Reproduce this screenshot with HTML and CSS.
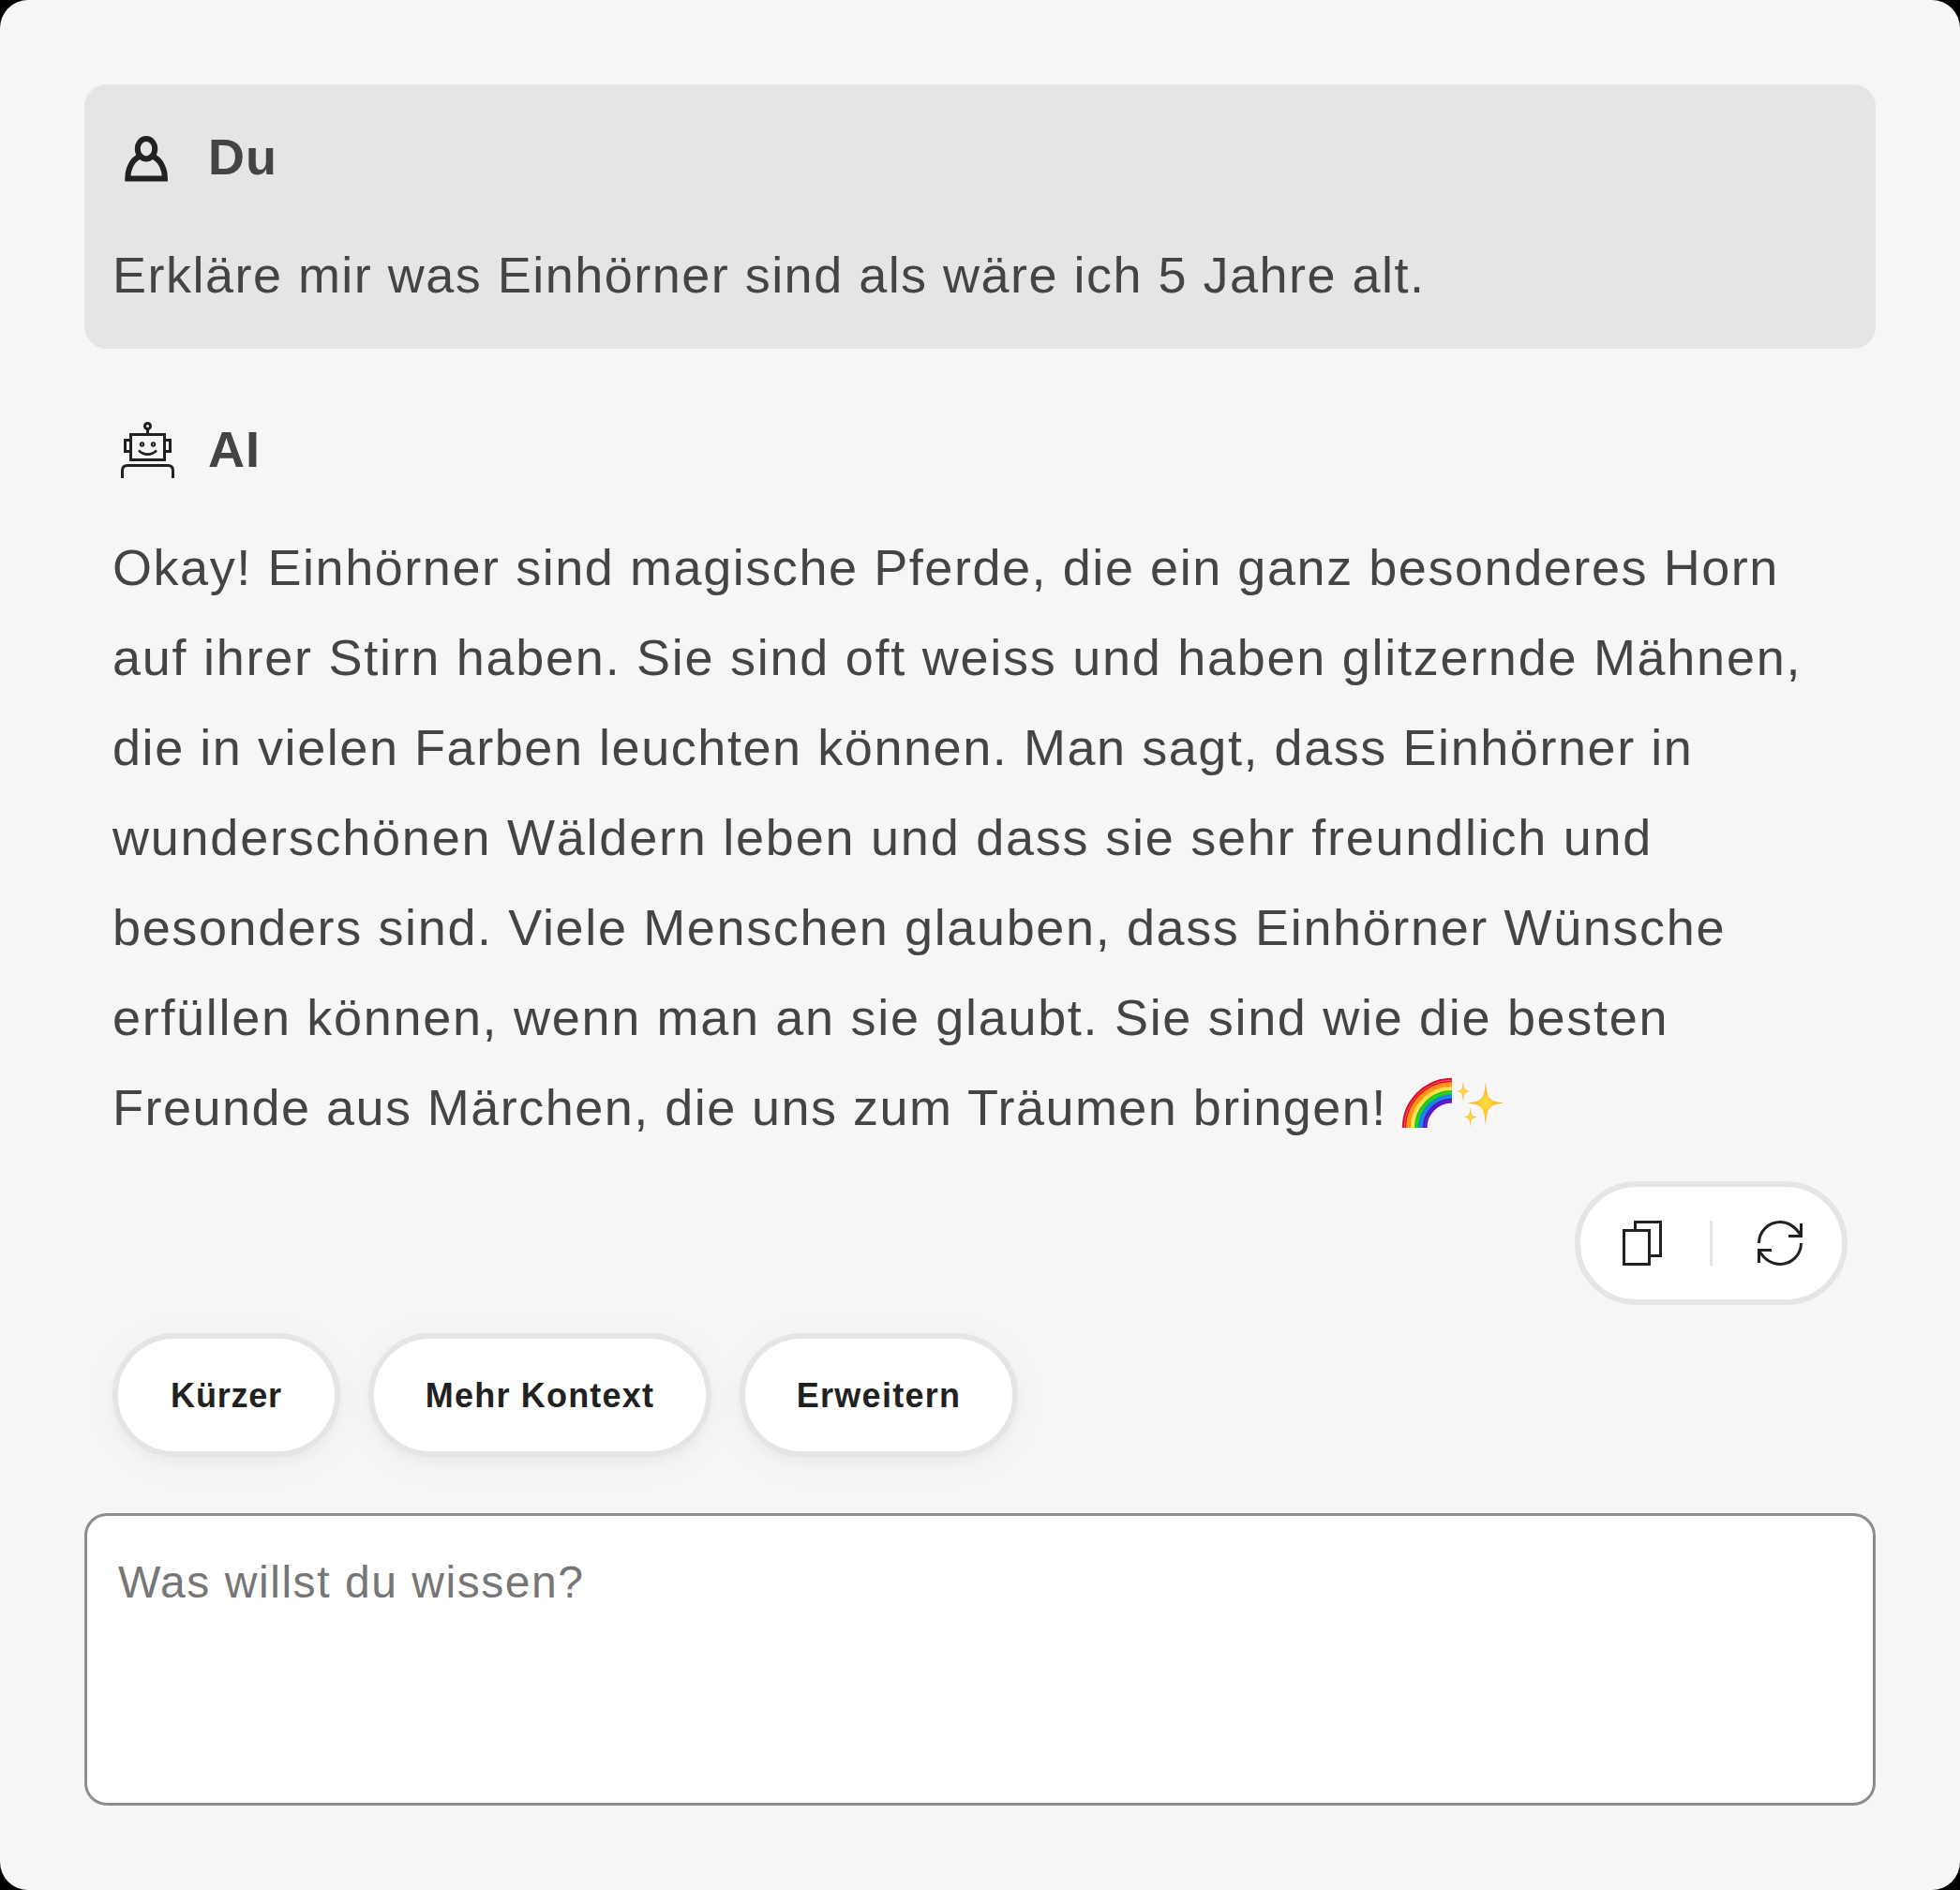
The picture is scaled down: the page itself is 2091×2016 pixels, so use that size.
FILE: index.html
```html
<!DOCTYPE html>
<html lang="de">
<head>
<meta charset="utf-8">
<title>AI Chat</title>
<link rel="stylesheet" href="styles.css">
</head>
<body>
<main class="chat">
  <section class="message message-user">
    <header class="message-header">
      <svg class="avatar" viewBox="120 132 72 72" aria-hidden="true">
        <g fill="none" stroke="#212121" stroke-width="6">
          <ellipse cx="156" cy="158.7" rx="9.2" ry="10.7"/>
          <path d="M148.4 167C140.5 171 136.3 180.5 136.3 190.5H175.9C175.9 180.5 171.6 171 163.7 167"/>
        </g>
      </svg>
      <h2 class="author">Du</h2>
    </header>
    <p class="text">Erkläre mir was Einhörner sind als wäre ich 5 Jahre alt.</p>
  </section>

  <section class="message">
    <header class="message-header">
      <svg class="avatar" viewBox="120 444 72 72" aria-hidden="true">
        <g fill="none" stroke="#212121" stroke-width="3">
          <circle cx="157.5" cy="454.5" r="3"/>
          <path d="M157.5 457.5V463.5"/>
          <rect x="139.5" y="463.5" width="36" height="27"/>
          <path d="M139.5 469.5H133.5V481.5H139.5M175.5 469.5H181.5V481.5H175.5"/>
          <path d="M130.5 510V502Q130.5 496.5 136 496.5H179Q184.5 496.5 184.5 502V510"/>
          <path d="M148 480.3C153 486 162 486 167 480.3" stroke-width="2.6"/>
          <circle cx="151.5" cy="474" r="1.7" stroke-width="2"/>
          <circle cx="163.5" cy="474" r="1.7" stroke-width="2"/>
        </g>
      </svg>
      <h2 class="author">AI</h2>
    </header>
    <p class="text">
      <span class="line line-1">Okay! Einhörner sind magische Pferde, die ein ganz besonderes Horn</span>
      <span class="line line-2">auf ihrer Stirn haben. Sie sind oft weiss und haben glitzernde Mähnen,</span>
      <span class="line line-3">die in vielen Farben leuchten können. Man sagt, dass Einhörner in</span>
      <span class="line line-4">wunderschönen Wäldern leben und dass sie sehr freundlich und</span>
      <span class="line line-5">besonders sind. Viele Menschen glauben, dass Einhörner Wünsche</span>
      <span class="line line-6">erfüllen können, wenn man an sie glaubt. Sie sind wie die besten</span>
      <span class="line line-7">Freunde aus Märchen, die uns zum Träumen bringen! <svg class="emoji" viewBox="1496 1148 110 56" role="img" aria-label="Regenbogen und Funken">
        <defs>
          <radialGradient id="gold">
            <stop offset="0" stop-color="#ffdf45"/>
            <stop offset=".45" stop-color="#fdc62f"/>
            <stop offset="1" stop-color="#f39a35"/>
          </radialGradient>
        </defs>
        <g fill="none" stroke-width="4.7">
          <path stroke="#e30b20" d="M1499.2 1203A50.8 50.8 0 0 1 1550 1152.2"/>
          <path stroke="#ff8a0c" d="M1503.6 1203A46.4 46.4 0 0 1 1550 1156.6"/>
          <path stroke="#ffdc38" d="M1508 1203A42 42 0 0 1 1550 1161"/>
          <path stroke="#12c81c" d="M1512.4 1203A37.6 37.6 0 0 1 1550 1165.4"/>
          <path stroke="#1279f0" d="M1516.8 1203A33.2 33.2 0 0 1 1550 1169.8"/>
          <path stroke="#5212bd" d="M1521.2 1203A28.8 28.8 0 0 1 1550 1174.2"/>
        </g>
        <g fill="none" stroke-width="1" stroke-opacity=".35">
          <path stroke="#fff" d="M1499.2 1203A50.8 50.8 0 0 1 1550 1152.2M1508 1203A42 42 0 0 1 1550 1161"/>
          <path stroke="#ffe14a" d="M1503.6 1203A46.4 46.4 0 0 1 1550 1156.6"/>
          <path stroke="#7dff6a" d="M1512.4 1203A37.6 37.6 0 0 1 1550 1165.4"/>
          <path stroke="#6fc0ff" d="M1516.8 1203A33.2 33.2 0 0 1 1550 1169.8"/>
          <path stroke="#a460ff" d="M1521.2 1203A28.8 28.8 0 0 1 1550 1174.2"/>
        </g>
        <g fill="url(#gold)">
          <path d="M1586 1154C1587.500 1172 1590 1174.500 1605 1176.500C1590 1178.500 1587.500 1181 1586 1200.500C1584.500 1181 1582 1178.500 1567 1176.500C1582 1174.500 1584.500 1172 1586 1154Z"/>
          <path d="M1562 1153.500C1562.700 1161.500 1563.800 1163.200 1569.500 1164C1563.800 1164.800 1562.700 1166.500 1562 1174.500C1561.300 1166.500 1560.200 1164.800 1554.500 1164C1560.200 1163.200 1561.300 1161.500 1562 1153.500Z"/>
          <path d="M1569.700 1181C1570.400 1189 1571.500 1190.700 1577 1191.500C1571.500 1192.300 1570.400 1194 1569.700 1202C1569 1194 1567.900 1192.300 1562.500 1191.500C1567.900 1190.700 1569 1189 1569.700 1181Z"/>
        </g>
      </svg></span>
    </p>
    <div class="toolbar">
      <button class="icon-button" type="button" aria-label="Kopieren">
        <svg class="icon" viewBox="1728 1302 48 48">
          <g fill="none" stroke="#212121" stroke-width="3">
            <rect x="1732.5" y="1312.5" width="27" height="36"/>
            <path d="M1744.5 1311V1303.5H1771.5V1339.5H1761"/>
          </g>
        </svg>
      </button>
      <span class="divider"></span>
      <button class="icon-button" type="button" aria-label="Neu generieren">
        <svg class="icon" viewBox="1875 1302 48 48">
          <g fill="none" stroke="#212121" stroke-width="3">
            <path d="M1876.5 1326A22.5 22.5 0 0 1 1899 1303.5C1908 1303.5 1916 1309.5 1921.2 1317.5"/>
            <path d="M1921.5 1305V1318.5H1908"/>
            <path d="M1921.5 1326A22.5 22.5 0 0 1 1899 1348.5C1890 1348.5 1882 1342.5 1876.8 1334.5"/>
            <path d="M1876.5 1347V1333.5H1890"/>
          </g>
        </svg>
      </button>
    </div>
    <div class="suggestions">
      <button class="chip chip-shorter" type="button">Kürzer</button>
      <button class="chip chip-context" type="button">Mehr Kontext</button>
      <button class="chip chip-expand" type="button">Erweitern</button>
    </div>
  </section>

  <textarea class="prompt" placeholder="Was willst du wissen?"></textarea>
</main>
</body>
</html>
```
FILE: styles.css
```css
* {
  box-sizing: border-box;
}

body {
  margin: 0;
  background: #000;
  font-family: "Liberation Sans", Arial, sans-serif;
  letter-spacing: 1.48px;
}

.chat {
  display: flex;
  flex-direction: column;
  gap: 30px;
  width: 2091px;
  height: 2016px;
  padding: 90px;
  border-radius: 30px;
  background: #f6f6f6;
}

.message {
  display: flex;
  flex-direction: column;
  gap: 30px;
  padding: 30px;
  border-radius: 24px;
  color: #444;
}

.message-user {
  background: #e5e5e5;
}

.message-header {
  display: flex;
  align-items: center;
  gap: 30px;
  height: 96px;
}

.avatar {
  width: 72px;
  height: 72px;
}

.author {
  height: 96px;
  margin: 0;
  font-size: 54px;
  letter-spacing: 1px;
  line-height: 94px;
}

.text {
  margin: -1px 0 1px;
  font-size: 54px;
  line-height: 96px;
  white-space: nowrap;
}

.line {
  display: block;
  height: 96px;
}

.line-1 { letter-spacing: 1.56px; }
.line-2 { letter-spacing: 1.73px; }
.line-3 { letter-spacing: 1.56px; }
.line-4 { letter-spacing: 1.77px; }
.line-5 { letter-spacing: 1.63px; }
.line-6 { letter-spacing: 1.69px; }
.line-7 { letter-spacing: 1.47px; }

.emoji {
  display: inline-block;
  width: 110px;
  height: 56px;
  margin: 0 0 -4px -1px;
  vertical-align: baseline;
}

.toolbar {
  display: flex;
  align-items: center;
  align-self: flex-end;
  justify-content: space-between;
  width: 291px;
  height: 132px;
  padding: 0 42px;
  border: 6px solid #e5e5e5;
  border-radius: 66px;
  background: #fff;
}

.icon-button {
  display: flex;
  padding: 0;
  border: 0;
  background: none;
}

.icon {
  width: 48px;
  height: 48px;
}

.divider {
  width: 3px;
  height: 48px;
  background: #e5e5e5;
}

.suggestions {
  display: flex;
  gap: 30px;
}

.chip {
  height: 132px;
  padding: 2px 0 0;
  border: 6px solid #e5e5e5;
  border-radius: 66px;
  background: #fff;
  box-shadow: 0 6px 12px rgba(0, 0, 0, 0.03), 0 6px 48px rgba(0, 0, 0, 0.03);
  color: #212121;
  font: bold 36px "Liberation Sans", Arial, sans-serif;
}

.chip-shorter {
  width: 243px;
  letter-spacing: 0.8px;
}

.chip-context {
  width: 366px;
  letter-spacing: 1.2px;
}

.chip-expand {
  width: 297px;
  letter-spacing: 1.25px;
}

.prompt {
  display: block;
  width: 100%;
  height: 312px;
  padding: 41px 33px;
  border: 3px solid #8d8d8d;
  border-radius: 24px;
  outline: 0;
  background: #fff;
  font: 48px/60px "Liberation Sans", Arial, sans-serif;
  letter-spacing: 1.55px;
  resize: none;
}

.prompt::placeholder {
  color: #767676;
}
```
